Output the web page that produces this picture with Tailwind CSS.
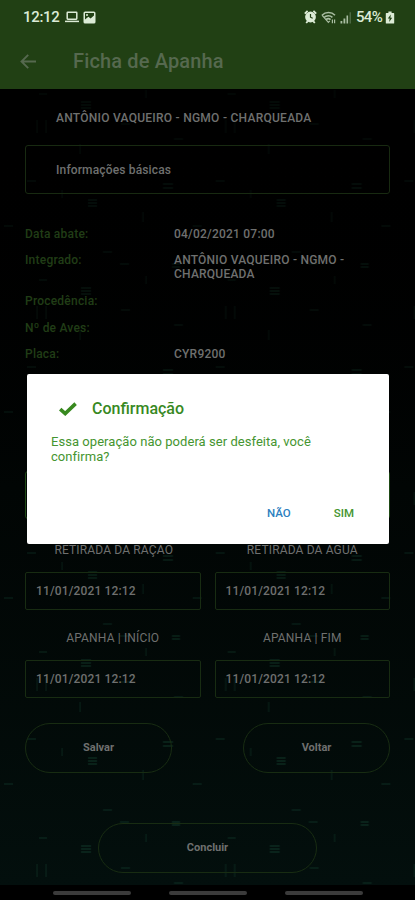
<!DOCTYPE html>
<html lang="pt-BR">
  <head>
    <meta charset="UTF-8" />
    <meta name="viewport" content="width=device-width, initial-scale=1.0" />
    <title>Ficha de Apanha</title>
    <script src="https://cdn.jsdelivr.net/npm/@tailwindcss/browser@4"></script>
  </head>
  <body class="bg-black font-[Roboto,sans-serif]">
    <div class="relative flex h-[900px] w-[415px] flex-col overflow-hidden">
      <header class="h-[89px] shrink-0 bg-[#214014]">
        <!-- Barra de status -->
        <div class="flex h-[34px] items-center pl-[23px] pr-[20px] text-[#dcebd6]">
          <span class="w-[37px] whitespace-nowrap text-[15px] font-medium tracking-[-0.3px]">12:12</span>
          <svg class="ml-[5px] h-[12px] w-[14px]" viewBox="0 0 14 12" fill="none" stroke="currentColor" stroke-width="1.5">
            <rect x="2.2" y="1.2" width="9.6" height="7" rx="0.6" />
            <path d="M0 10.4h14" />
          </svg>
          <svg class="ml-[4px] h-[13px] w-[13px]" viewBox="0 0 13 13">
            <rect x="0.5" y="0.5" width="12" height="12" rx="1.6" fill="currentColor" />
            <path d="M2 2h9v2.4L7.6 7.4 5.4 5.8 2 8.4z" fill="#214014" />
            <circle cx="4" cy="3.9" r="1" fill="currentColor" />
          </svg>
          <svg class="ml-auto h-[14px] w-[13px]" viewBox="0 0 13 14">
            <path d="M0.8 3.6L3.6 0.9M12.2 3.6L9.4 0.9M2.2 13l1.6-1.8M10.8 13l-1.6-1.8" stroke="currentColor" stroke-width="1.8" />
            <circle cx="6.5" cy="7" r="5.4" fill="currentColor" />
            <path d="M6.5 4v3.2l2.2 1" fill="none" stroke="#214014" stroke-width="1.2" />
          </svg>
          <svg class="ml-[4px] h-[13px] w-[15px]" viewBox="0 0 15 13" fill="none" stroke="#a9bda2" stroke-width="1.6">
            <path d="M1 4.2C4.6 0.6 10.4 0.6 14 4.2" />
            <path d="M3 6.5c2.4-2.3 6.2-2.3 8.4-.2M5 8.7c1.4-1.3 3.2-1.3 4.6 0" />
            <path d="M1 4.2l6.4 7.2 1.4-1.5M11.4 8.6v3.6M13.6 8.6v3.6" stroke-width="1.2" />
          </svg>
          <svg class="ml-[4px] h-[13px] w-[12px]" viewBox="0 0 12 13" fill="#a9bda2">
            <path d="M0.5 10h1.8v2.5H0.5zM3.5 7.5h1.8v5H3.5zM6.5 4.5h1.6v8H6.5z" />
            <path d="M9.6 1.2h1.2v11.3H9.6z" fill="#587350" />
          </svg>
          <span class="ml-[4px] w-[29px] whitespace-nowrap text-[15px] font-medium tracking-[-0.7px]">54%</span>
          <svg class="h-[13px] w-[10px]" viewBox="0 0 10 13">
            <path d="M3.4 0.5h3.2v1.4H8.6q.6 0 .6.6v9.4q0 .6-.6.6H1.4q-.6 0-.6-.6V2.5q0-.6.6-.6h2z" fill="currentColor" />
            <path d="M5.8 3.6L2.8 7.6h1.8L4.2 11 7.2 6.8H5.4z" fill="#214014" />
          </svg>
        </div>
        <!-- Título -->
        <div class="flex h-[54px] items-center pl-[20px] text-[#56694f]">
          <svg class="h-[15px] w-[16px]" viewBox="0 0 16 15" fill="none" stroke="currentColor" stroke-width="1.9">
            <path d="M8.2 0.8L1.5 7.5l6.7 6.7M1.5 7.5H16" />
          </svg>
          <h1 class="ml-[37px] text-[20px] font-medium tracking-[0.15px]">Ficha de Apanha</h1>
        </div>
      </header>

      <main class="relative h-[796px] shrink-0 bg-linear-to-b from-black via-[#010504] to-[#030f0d] text-[#6f706f]">
        <!-- Textura de fundo -->
        <svg class="absolute inset-0 h-full w-full mask-t-from-20% mask-t-to-150%" aria-hidden="true">
          <defs>
            <pattern id="marks" width="188.7" height="186" patternUnits="userSpaceOnUse" y="11">
              <g fill="none" stroke="#22674a" stroke-opacity="0.24">
                <path d="M37 20v13M46 20v13M80 44v10M143 112v10M146 184v-8M62 90v8" stroke-width="1.2" />
                <path d="M121 24h9M174 39h9M27 81h9M4 126h9M103 152h9M39 180h8M120 164h9" stroke-width="1.3" />
                <path d="M163 84h10M163 88h10M88 100h9M88 103h9M88 106h9M81 2h10M81 5h10M81 8h10M172 164h8M172 167h8" stroke-width="1.8" />
              </g>
            </pattern>
          </defs>
          <rect width="100%" height="100%" fill="url(#marks)" />
        </svg>

        <div class="relative flex flex-col px-[25px]">
          <h2 class="mt-[21px] pl-[31px] text-[12px] font-medium leading-[16px] tracking-[0.26px]">ANTÔNIO VAQUEIRO - NGMO - CHARQUEADA</h2>
          <div class="mt-[19px] flex h-[49px] items-center rounded-[3px] border border-[#182a11] pl-[30px] text-[12px] font-medium tracking-[0.15px]">Informações básicas</div>

          <dl class="mt-[32.6px] grid grid-cols-[149px_1fr] gap-y-[12.7px] text-[12px] font-medium leading-[14px] tracking-[0.22px]">
            <dt class="text-[#203d16]">Data abate:</dt>
            <dd>04/02/2021 07:00</dd>
            <dt class="text-[#203d16]">Integrado:</dt>
            <dd>ANTÔNIO VAQUEIRO - NGMO -<br />CHARQUEADA</dd>
            <dt class="text-[#203d16]">Procedência:</dt>
            <dd></dd>
            <dt class="text-[#203d16]">Nº de Aves:</dt>
            <dd></dd>
            <dt class="text-[#203d16]">Placa:</dt>
            <dd>CYR9200</dd>
          </dl>

          <div class="mt-[110px] h-[48px] rounded-[3px] border border-[#1f4a16]"></div>

          <div class="mt-[23px] grid grid-cols-2 gap-x-[14px] text-[12px]">
            <div>
              <p class="pl-[2px] text-center leading-[16px] tracking-[0.15px]">RETIRADA DA RAÇÃO</p>
              <div class="mt-[14px] flex h-[38px] items-center rounded-[2px] border border-[#182c12] pl-[10px] font-medium tracking-[0.15px]">11/01/2021 12:12</div>
            </div>
            <div>
              <p class="text-center leading-[16px] tracking-[0.15px]">RETIRADA DA ÁGUA</p>
              <div class="mt-[14px] flex h-[38px] items-center rounded-[2px] border border-[#182c12] pl-[10px] font-medium tracking-[0.15px]">11/01/2021 12:12</div>
            </div>
            <div class="mt-[20px]">
              <p class="text-center leading-[16px] tracking-[0.15px]">APANHA | INÍCIO</p>
              <div class="mt-[14px] flex h-[38px] items-center rounded-[2px] border border-[#182c12] pl-[10px] font-medium tracking-[0.15px]">11/01/2021 12:12</div>
            </div>
            <div class="mt-[20px]">
              <p class="text-center leading-[16px] tracking-[0.15px]">APANHA | FIM</p>
              <div class="mt-[14px] flex h-[38px] items-center rounded-[2px] border border-[#182c12] pl-[10px] font-medium tracking-[0.15px]">11/01/2021 12:12</div>
            </div>
          </div>

          <!-- Ações -->
          <div class="mt-[25px] flex justify-between text-[11px] font-bold">
            <button class="h-[50px] w-[147px] rounded-full border border-[#182c12]">Salvar</button>
            <button class="h-[50px] w-[147px] rounded-full border border-[#182c12]">Voltar</button>
          </div>
          <button class="mx-auto mt-[50px] h-[50px] w-[219px] rounded-full border border-[#182c12] text-[11px] font-bold">Concluir</button>
        </div>
      </main>

      <!-- Barra de navegação -->
      <nav class="flex h-[15px] justify-center gap-[38px] bg-black pt-[6px]">
        <span class="h-[4px] w-[78px] rounded-full bg-[#3b3b3b]"></span>
        <span class="h-[4px] w-[78px] rounded-full bg-[#3b3b3b]"></span>
        <span class="h-[4px] w-[78px] rounded-full bg-[#3b3b3b]"></span>
      </nav>

      <!-- Diálogo de confirmação -->
      <div class="absolute left-[27px] top-[374px] flex h-[170px] w-[362px] flex-col rounded-[2px] bg-white text-[#459530]" role="dialog">
        <div class="mt-[24px] flex items-center pl-[32px]">
          <svg class="h-[14px] w-[18px]" viewBox="0 0 18 14" fill="none" stroke="#38891f" stroke-width="3.6">
            <path d="M1.2 7.2l5 4.4L16.6 1.6" />
          </svg>
          <h3 class="ml-[15px] text-[16px] font-medium leading-[22px] text-[#38891f]">Confirmação</h3>
        </div>
        <p class="mt-[14px] pl-[24px] text-[13px] leading-[15.4px] tracking-[0.05px]">Essa operação não poderá ser desfeita, você<br />confirma?</p>
        <div class="mt-auto flex justify-end gap-[43px] pb-[23px] pr-[35px] text-[11.5px] font-medium leading-[16px]">
          <button class="text-[#2d7fc0]">NÃO</button>
          <button>SIM</button>
        </div>
      </div>
    </div>
  </body>
</html>
